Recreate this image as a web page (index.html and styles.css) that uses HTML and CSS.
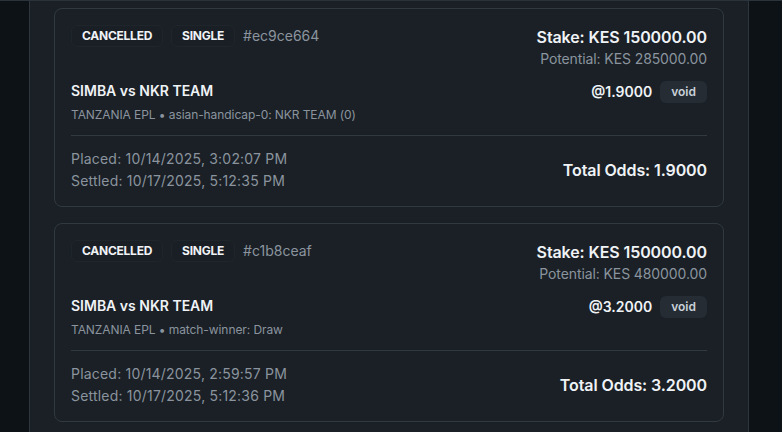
FILE: index.html
```html
<!DOCTYPE html>
<html>
<head>
<meta charset="utf-8">
<link rel="stylesheet" href="styles.css">
</head>
<body>
<div class="topline"></div>
<div class="wrap">
  <main class="panel">
    <article class="card">
      <div class="head">
        <div class="tags">
          <span class="badge">CANCELLED</span>
          <span class="badge">SINGLE</span>
          <span class="hash">#ec9ce664</span>
        </div>
        <div class="amounts">
          <div class="stake">Stake: KES 150000.00</div>
          <div class="potential">Potential: KES 285000.00</div>
        </div>
      </div>
      <div class="sel">
        <div class="sel-info">
          <div class="match">SIMBA vs NKR TEAM</div>
          <div class="market">TANZANIA EPL • asian-handicap-0: NKR TEAM (0)</div>
        </div>
        <div class="sel-odds">
          <span class="odds">@1.9000</span>
          <span class="pill">void</span>
        </div>
      </div>
      <div class="foot">
        <div class="dates">
          <div>Placed: 10/14/2025, 3:02:07 PM</div>
          <div>Settled: 10/17/2025, 5:12:35 PM</div>
        </div>
        <div class="total">Total Odds: 1.9000</div>
      </div>
    </article>
    <article class="card">
      <div class="head">
        <div class="tags">
          <span class="badge">CANCELLED</span>
          <span class="badge">SINGLE</span>
          <span class="hash">#c1b8ceaf</span>
        </div>
        <div class="amounts">
          <div class="stake">Stake: KES 150000.00</div>
          <div class="potential">Potential: KES 480000.00</div>
        </div>
      </div>
      <div class="sel">
        <div class="sel-info">
          <div class="match">SIMBA vs NKR TEAM</div>
          <div class="market">TANZANIA EPL • match-winner: Draw</div>
        </div>
        <div class="sel-odds">
          <span class="odds">@3.2000</span>
          <span class="pill">void</span>
        </div>
      </div>
      <div class="foot">
        <div class="dates">
          <div>Placed: 10/14/2025, 2:59:57 PM</div>
          <div>Settled: 10/17/2025, 5:12:36 PM</div>
        </div>
        <div class="total">Total Odds: 3.2000</div>
      </div>
    </article>
  </main>
</div>
</body>
</html>
```
FILE: styles.css
```css
* { box-sizing: border-box; }
html, body { margin: 0; height: 100%; }
body {
  background: #0d1216;
  font-family: Inter, "Noto Sans", sans-serif;
  color: #e6edf3;
  overflow: hidden;
}
.topline { height: 1px; background: #2c343b; }
.wrap { padding-left: 29px; }
.panel {
  width: 720px;
  min-height: 440px;
  background: #1a2026;
  border-left: 1px solid #2f373e;
  border-right: 1px solid #2f373e;
  padding: 7px 24px 0;
  display: flex;
  flex-direction: column;
  gap: 16px;
}
.card {
  border: 1px solid #313a41;
  border-radius: 8px;
  background: #1a2026;
  padding: 16px 16px 15px;
}
.head {
  display: flex;
  justify-content: space-between;
  align-items: flex-start;
}
.tags {
  display: flex;
  align-items: center;
  gap: 8px;
}
.badge {
  font-size: 12px;
  line-height: 16px;
  font-weight: 700;
  letter-spacing: -0.25px;
  color: #f0f3f6;
  padding: 2px 10px;
  border: 1px solid #1e252b;
  background: #1a1f25;
  border-radius: 6px;
}
.hash {
  font-size: 14px;
  line-height: 20px;
  color: #8b949e;
}
.amounts { text-align: right; }
.stake {
  font-size: 16px;
  line-height: 24px;
  font-weight: 600;
  letter-spacing: -0.1px;
  color: #f0f3f6;
}
.potential {
  font-size: 14px;
  line-height: 20px;
  color: #8b949e;
  letter-spacing: -0.1px;
}
.sel {
  display: flex;
  justify-content: space-between;
  align-items: flex-start;
  margin-top: 12px;
  padding-bottom: 12px;
}
.match {
  font-size: 14px;
  line-height: 20px;
  font-weight: 600;
  color: #f0f3f6;
}
.market {
  font-size: 12px;
  line-height: 16px;
  color: #8b949e;
  margin-top: 6px;
  letter-spacing: -0.08px;
}
.sel-odds {
  display: flex;
  align-items: center;
  gap: 8px;
}
.odds {
  font-size: 14px;
  line-height: 20px;
  font-weight: 600;
  color: #f0f3f6;
}
.pill {
  font-size: 12px;
  line-height: 16px;
  font-weight: 600;
  color: #c9d1d9;
  background: #252c33;
  border-radius: 6px;
  padding: 3px 11px;
}
.foot {
  border-top: 1px solid #313a41;
  padding-top: 13px;
  display: flex;
  justify-content: space-between;
  align-items: center;
}
.dates {
  font-size: 14px;
  line-height: 20px;
  color: #8b949e;
  letter-spacing: 0.2px;
  display: flex;
  flex-direction: column;
  gap: 2px;
}
.total {
  font-size: 16px;
  line-height: 24px;
  font-weight: 600;
  letter-spacing: -0.1px;
  color: #f0f3f6;
}
```
